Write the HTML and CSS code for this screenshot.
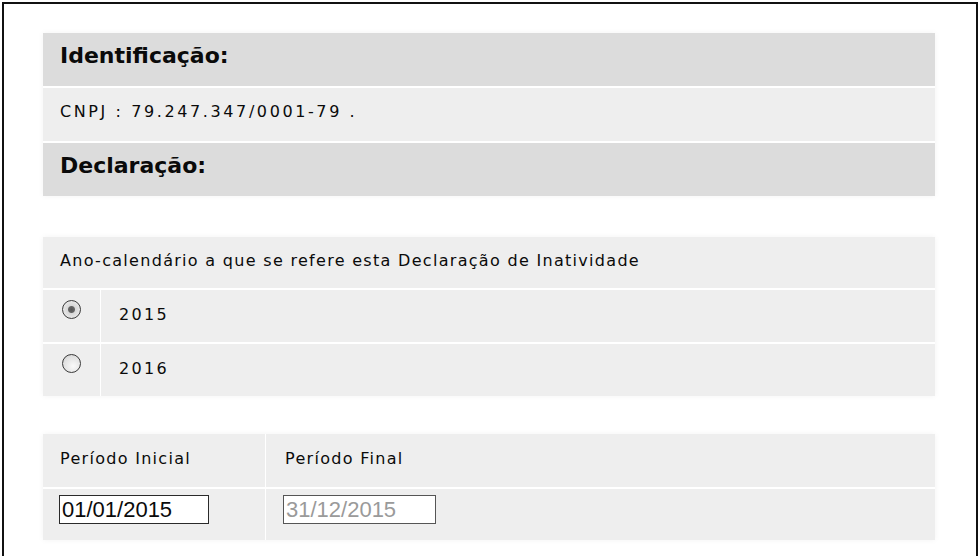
FILE: index.html
```html
<!DOCTYPE html>
<html lang="pt-BR">
<head>
    <meta charset="UTF-8">
    <meta name="viewport" content="width=device-width, initial-scale=1.0">
    <title>Declaração de Inatividade</title>
    <link rel="stylesheet" href="styles.css">
</head>
<body>
    <div class="frame">
        <div class="panel">
            <div class="row head"><h2>Identificação:</h2></div>
            <div class="row cnpj">CNPJ : 79.247.347/0001-79 .</div>
            <div class="row head"><h2>Declaração:</h2></div>
        </div>

        <div class="panel anos">
            <div class="row short">Ano-calendário a que se refere esta Declaração de Inatividade</div>
            <label class="choice">
                <span class="radio-cell"><input type="radio" name="ano" value="2015" checked></span>
                <span class="year">2015</span>
            </label>
            <label class="choice">
                <span class="radio-cell"><input type="radio" name="ano" value="2016"></span>
                <span class="year">2016</span>
            </label>
        </div>

        <div class="panel periodo">
            <div class="cell label-cell">Período Inicial</div>
            <div class="cell label-cell second">Período Final</div>
            <div class="cell field"><input class="date" type="text" value="01/01/2015"></div>
            <div class="cell field second"><input class="date disabled" type="text" value="31/12/2015" disabled></div>
        </div>
    </div>
</body>
</html>
```

FILE: styles.css
```css
body {
    margin: 0;
    background: #fff;
    font-family: 'DejaVu Sans', Verdana, sans-serif;
    color: #0a0a0a;
    overflow: hidden;
}

.frame {
    margin: 2px 2px 0 2px;
    height: calc(100vh - 2px);
    box-sizing: border-box;
    border: 2px solid #111;
    border-bottom: none;
    padding: 29px 41px 0 39px;
}

.panel {
    display: flex;
    flex-direction: column;
    gap: 2px;
    margin-bottom: 41px;
    box-shadow: 0 0 6px rgba(0,0,0,0.05);
}

.panel.anos {
    margin-bottom: 38px;
}

.row {
    height: 53px;
    display: flex;
    align-items: center;
    padding: 0 17px 6px 17px;
    box-sizing: border-box;
    background: #eeeeee;
    font-size: 16px;
    letter-spacing: 1.3px;
}

.row.short {
    height: 51px;
    padding-bottom: 4px;
}

.row.cnpj {
    letter-spacing: 2.6px;
}

.row.head {
    background: #dcdcdc;
    padding-bottom: 8px;
}

h2 {
    margin: 0;
    font-size: 22px;
    font-weight: bold;
    letter-spacing: 0;
}

.choice {
    display: grid;
    grid-template-columns: 57px 1fr;
    gap: 1px;
    height: 52px;
    background: #fff;
}

.radio-cell {
    background: #eeeeee;
    padding: 10px 0 0 19px;
    box-sizing: border-box;
}

.radio-cell input {
    appearance: none;
    -webkit-appearance: none;
    margin: 0;
    width: 19px;
    height: 19px;
    border: 1.5px solid #3a3a3a;
    border-radius: 50%;
    background: radial-gradient(circle at 60% 65%, #fafafa 0, #e2e2e2 60%, #c8c8c8 100%);
    box-sizing: border-box;
}

.radio-cell input:checked {
    background: radial-gradient(circle, #555 0, #666 3px, #d8d8d8 4px, #f2f2f2 100%);
}

.year {
    background: #eeeeee;
    display: flex;
    align-items: center;
    padding: 0 0 4px 18px;
    font-size: 16px;
    letter-spacing: 2.3px;
}

.periodo {
    display: grid;
    grid-template-columns: 222px 1fr;
    gap: 2px 1px;
    background: #fff;
}

.cell {
    background: #eeeeee;
    height: 53px;
    display: flex;
    align-items: center;
    padding: 0 0 0 16px;
    box-sizing: border-box;
    font-size: 16px;
    letter-spacing: 1.3px;
}

.cell.label-cell {
    padding: 0 0 5px 17px;
}

.cell.field {
    height: 51px;
}

.cell.second {
    padding-left: 17px;
}

.cell.label-cell.second {
    padding-left: 19px;
}

.date {
    width: 150px;
    height: 29px;
    margin: 0 0 10px 0;
    padding: 0 2px;
    box-sizing: border-box;
    border: 1px solid #2a2a2a;
    background: #fff;
    font-family: 'Liberation Sans', Arial, sans-serif;
    font-size: 22px;
    color: #0a0a0a;
}

.date.disabled {
    width: 153px;
    border-color: #555;
    color: #9a9a9a;
}
```
